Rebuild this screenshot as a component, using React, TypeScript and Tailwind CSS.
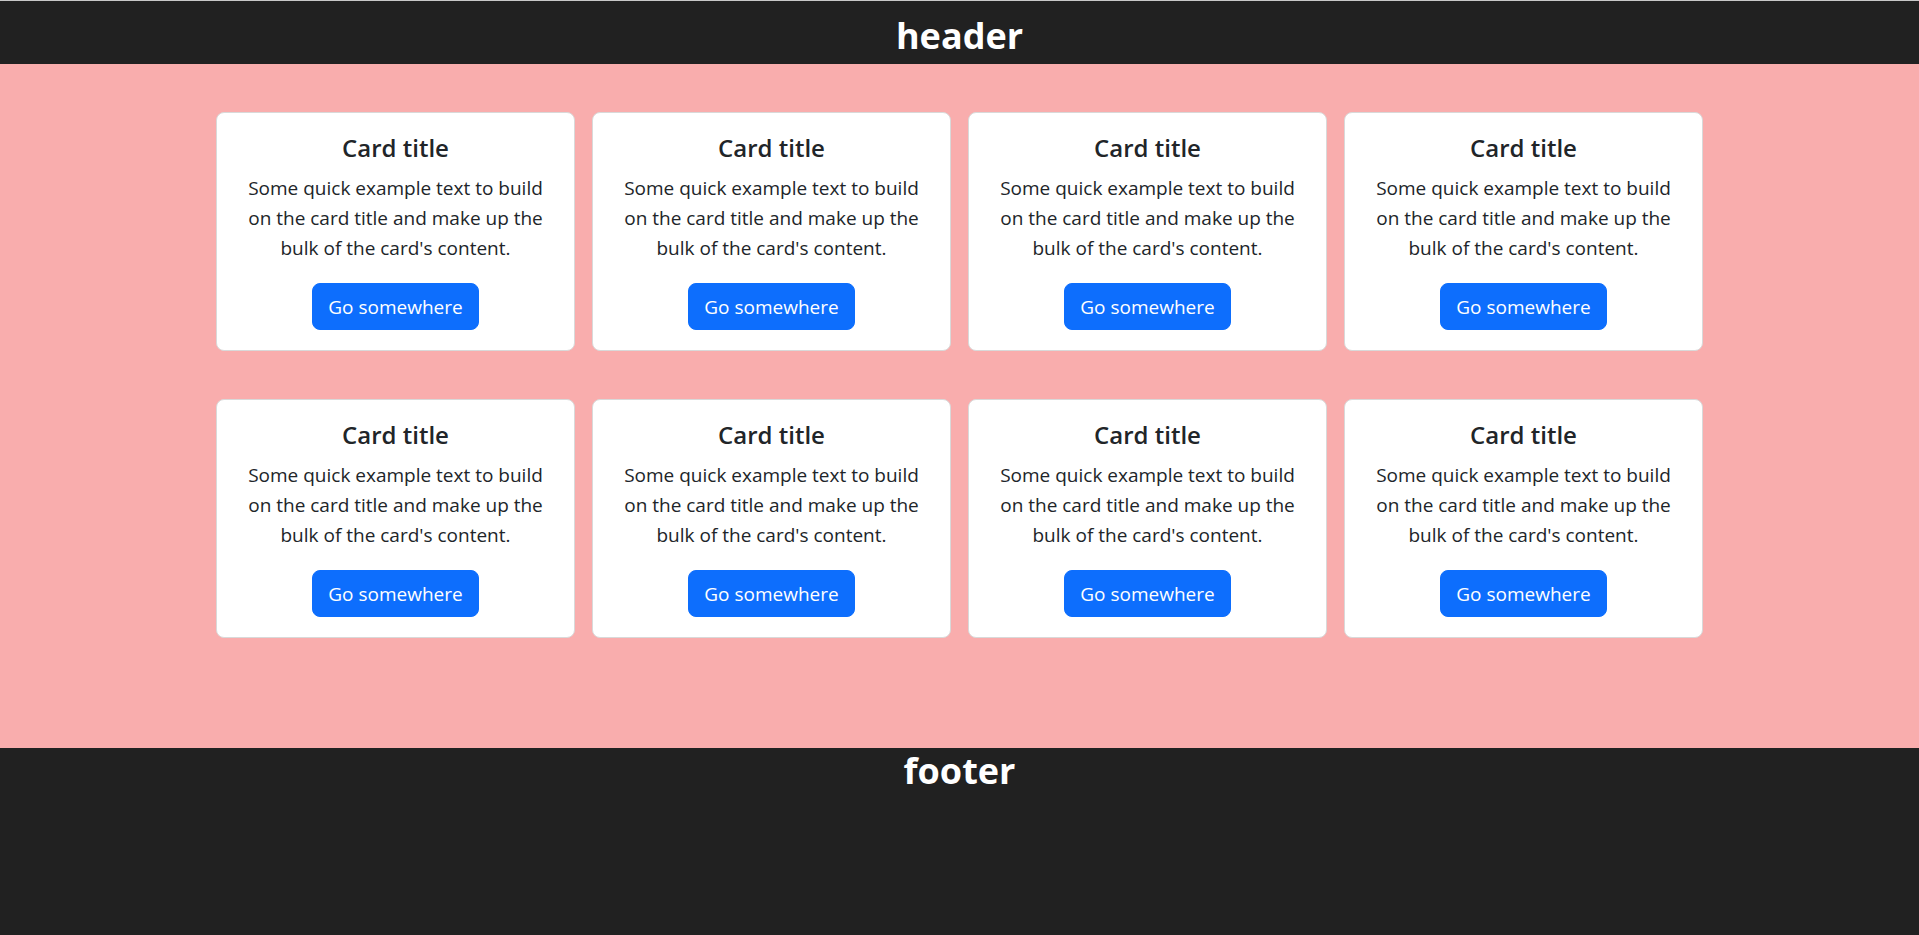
const cards = Array.from({ length: 8 }, (_, i) => i);

function Card() {
  return (
    <div className="flex flex-col items-center rounded-[8px] border border-[#d9d9d9] bg-white p-[20px] text-center text-[#212529]">
      <h5 className="text-[24px] font-semibold leading-[30px]">Card title</h5>
      <p className="mt-[10px] text-[19px] leading-[30px]">
        Some quick example text to build on the card title and make up the bulk of the card's content.
      </p>
      <a
        href="#"
        className="mt-[20px] rounded-[8px] border border-[#0d6efd] bg-[#0d6efd] px-[15px] py-[7.5px] text-[19px] leading-[30px] text-white"
      >
        Go somewhere
      </a>
    </div>
  );
}

export default function App() {
  return (
    <div className="min-h-screen bg-[#212121] font-['Open_Sans',sans-serif]">
      <header className="flex h-[64px] items-center justify-center border-t border-[#c8c8c8] bg-[#212121] pt-[6px]">
        <h1 className="text-[36px] font-bold leading-[46px] text-white">header</h1>
      </header>

      <main className="h-[684px] bg-[#f9adad] pt-[48px]">
        <div className="grid grid-cols-[repeat(4,358.5px)] justify-center gap-x-[17.5px] gap-y-[48px]">
          {cards.map((i) => (
            <Card key={i} />
          ))}
        </div>
      </main>

      <footer className="h-[187px] bg-[#212121] text-center">
        <h2 className="text-[36px] font-bold leading-[46px] text-white">footer</h2>
      </footer>
    </div>
  );
}
